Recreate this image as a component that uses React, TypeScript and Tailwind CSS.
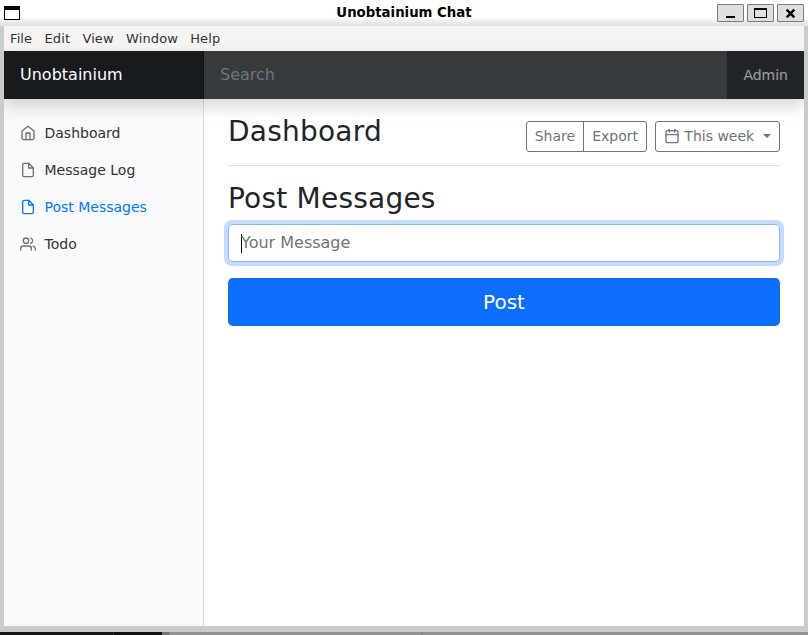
import React from "react";

type IconProps = { className?: string; children: React.ReactNode };

function Icon({ className = "", children }: IconProps) {
  return (
    <svg
      className={`inline-block h-4 w-4 shrink-0 ${className}`}
      viewBox="0 0 24 24"
      fill="none"
      stroke="currentColor"
      strokeWidth="2"
      strokeLinecap="round"
      strokeLinejoin="round"
    >
      {children}
    </svg>
  );
}

const home = (
  <>
    <path d="M3 9l9-7 9 7v11a2 2 0 0 1-2 2H5a2 2 0 0 1-2-2z" />
    <polyline points="9 22 9 12 15 12 15 22" />
  </>
);
const file = (
  <>
    <path d="M13 2H6a2 2 0 0 0-2 2v16a2 2 0 0 0 2 2h12a2 2 0 0 0 2-2V9z" />
    <polyline points="13 2 13 9 20 9" />
  </>
);
const users = (
  <>
    <path d="M17 21v-2a4 4 0 0 0-4-4H5a4 4 0 0 0-4 4v2" />
    <circle cx="9" cy="7" r="4" />
    <path d="M23 21v-2a4 4 0 0 0-3-3.87" />
    <path d="M16 3.13a4 4 0 0 1 0 7.75" />
  </>
);
const calendar = (
  <>
    <rect x="3" y="4" width="18" height="18" rx="2" ry="2" />
    <line x1="16" y1="2" x2="16" y2="6" />
    <line x1="8" y1="2" x2="8" y2="6" />
    <line x1="3" y1="10" x2="21" y2="10" />
  </>
);

const links = [
  { label: "Dashboard", icon: home, active: false },
  { label: "Message Log", icon: file, active: false },
  { label: "Post Messages", icon: file, active: true },
  { label: "Todo", icon: users, active: false },
];

function TitleBar() {
  const button =
    "flex h-[18px] w-[27px] items-center justify-center rounded-[1px] border border-[#7b7b7b] bg-[#dfdfdf]";
  return (
    <div className="grid h-[26px] grid-cols-[1fr_auto_1fr] bg-[linear-gradient(to_bottom,#fff_0,#fff_16px,#dfdfdf_26px)]">
      <div className="pt-1.5 pl-1">
        <div className="h-3.5 w-4 border border-t-4 border-black bg-white" />
      </div>
      <div className="pt-[3px] text-[13.3px] leading-[19px] font-bold text-black">Unobtainium Chat</div>
      <div className="flex justify-end gap-[3px] pt-1 pr-1">
        <div className={button}>
          <svg width="25" height="16" shapeRendering="crispEdges">
            <rect x="8" y="11" width="9" height="2" />
          </svg>
        </div>
        <div className={button}>
          <svg width="25" height="16" shapeRendering="crispEdges">
            <path fillRule="evenodd" d="M6 3h13v10H6z M7 5v7h11V5z" />
          </svg>
        </div>
        <div className={button}>
          <svg width="25" height="16">
            <path d="M8.7 4.7l7.6 7.6M16.3 4.7l-7.6 7.6" stroke="black" strokeWidth="2.5" />
          </svg>
        </div>
      </div>
    </div>
  );
}

function Header() {
  return (
    <header className="relative z-10 flex h-12 bg-[#212529] shadow-[0_8px_16px_rgba(0,0,0,0.15)]">
      <div className="w-[200px] bg-black/25 px-4 py-3 text-base text-white shadow-[inset_-1px_0_0_rgba(0,0,0,0.25)]">
        Unobtainium
      </div>
      <input
        className="min-w-0 flex-1 bg-white/10 px-4 pb-px text-base text-white outline-none placeholder:text-[#6c757d]"
        placeholder="Search"
      />
      <div className="px-4 py-[13.5px] text-sm leading-[21px] text-white/55">Admin</div>
    </header>
  );
}

export default function App() {
  return (
    <div className="flex h-[635px] w-[808px] flex-col overflow-hidden bg-[#cbcbcb] font-['DejaVu_Sans',sans-serif]">
      <TitleBar />
      <div className="mx-1 flex h-[600px] flex-col overflow-hidden bg-white">
        <nav className="flex h-[25px] shrink-0 gap-[12.3px] bg-[#f5f4f2] px-1.5 text-[13px] leading-[25px] tracking-[0.11px] text-[#2e3436]">
          {["File", "Edit", "View", "Window", "Help"].map((m) => (
            <span key={m}>{m}</span>
          ))}
        </nav>
        <Header />
        <div className="flex flex-1">
          <aside className="w-[200px] bg-[#f8f9fa] pt-4 shadow-[inset_-1px_0_0_rgba(0,0,0,0.1)]">
            {links.map((l) => (
              <a
                key={l.label}
                className={`flex items-center gap-[8.5px] px-4 py-2 text-sm leading-[21px] font-medium ${l.active ? "text-[#007bff]" : "text-[#333]"}`}
              >
                <Icon className={l.active ? "mb-px" : "mb-px text-[#727272]"}>{l.icon}</Icon>
                {l.label}
              </a>
            ))}
          </aside>
          <main className="flex-1 px-6 pt-4 text-[#212529]">
            <div className="mb-4 flex h-[51px] items-start justify-between border-b border-[#dee2e6]">
              <h1 className="text-[28px] leading-[33px] tracking-[0.22px]">Dashboard</h1>
              <div className="flex gap-2 pt-1.5 text-sm leading-[21px] text-[#6c757d]">
                <div className="flex h-[31px] rounded-[3px] border border-[#6c757d]">
                  <button className="px-2">Share</button>
                  <button className="border-l border-[#6c757d] px-2">Export</button>
                </div>
                <button className="flex h-[31px] items-center rounded-[3px] border border-[#6c757d] px-2">
                  <Icon className="mr-[4.4px] mb-px">{calendar}</Icon>
                  This week
                  <span className="mb-[2px] ml-[8.8px] border-x-[4.2px] border-t-[4.2px] border-x-transparent border-t-[#6c757d]" />
                </button>
              </div>
            </div>
            <h2 className="mb-2 text-[28px] leading-[34px] tracking-[0.22px]">Post Messages</h2>
            <div className="mb-4 flex h-[38px] items-center rounded border border-[#86b7fe] px-3 text-base text-[#6c757d] shadow-[0_0_0_4px_rgba(13,110,253,0.25)]">
              <span className="-mr-px h-[19px] w-px bg-black" />
              <span className="pb-px">Your Message</span>
            </div>
            <button className="h-12 w-full rounded-[5px] bg-[#0d6efd] text-xl text-white">Post</button>
          </main>
        </div>
      </div>
      <div className="h-1.5 shrink-0" />
      <div className="flex h-[3px] shrink-0">
        <div className="w-[113px] bg-[#171717]" />
        <div className="w-px bg-[#2b2b2b]" />
        <div className="w-12 bg-[#111]" />
        <div className="w-[7px] bg-[#757575]" />
        <div className="w-px bg-[#858585]" />
        <div className="w-[251px] bg-[#929292]" />
        <div className="w-[2px] bg-[#858585]" />
        <div className="flex-1 bg-[#929292]" />
      </div>
    </div>
  );
}
